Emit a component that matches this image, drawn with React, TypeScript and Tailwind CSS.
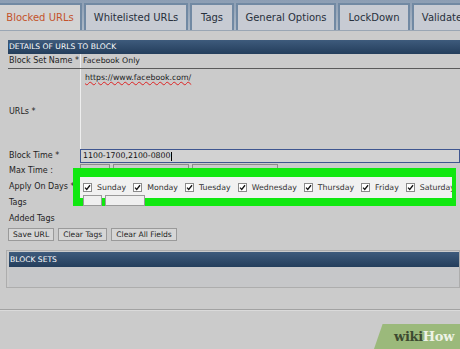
import React from 'react';

const tabs = [
  { label: 'Blocked URLs', w: 'w-[82px]', active: true },
  { label: 'Whitelisted URLs', w: 'w-[104px]' },
  { label: 'Tags', w: 'w-[44px]' },
  { label: 'General Options', w: 'w-[100px]' },
  { label: 'LockDown', w: 'w-[72px]' },
  { label: 'Validate', w: 'w-[60px]' },
];

const days = ['Sunday', 'Monday', 'Tuesday', 'Wednesday', 'Thursday', 'Friday', 'Saturday'];

function Check() {
  return (
    <span className="grid size-[9px] shrink-0 place-items-center border border-[#8a8a8a] bg-white">
      <svg width="7" height="7" viewBox="0 0 10 10" aria-hidden="true">
        <path d="M1.5 5.2l2.4 2.6L8.6 1.8" stroke="#111" strokeWidth="1.8" fill="none" />
      </svg>
    </span>
  );
}

function Label({ children, className = '' }: { children: React.ReactNode; className?: string }) {
  return <div className={`w-[72px] shrink-0 whitespace-nowrap pl-[1px] text-[8px] text-[#1e1e1e] ${className}`}>{children}</div>;
}

export default function App() {
  return (
    <div className="relative h-[349px] w-[460px] overflow-hidden bg-[#cbcbcb] font-['DejaVu_Sans',sans-serif]">
      {/* tab strip */}
      <div className="flex h-[31px] items-end gap-[2px] border-b border-[#9aa6b4] bg-gradient-to-b from-[#8b9db3] to-[#aeb9c6] pt-[4px]">
        {tabs.map((t) => (
          <div
            key={t.label}
            className={`flex h-[27px] shrink-0 items-center justify-center whitespace-nowrap border-x-2 border-t-2 border-[#7189a3] text-[10px] ${t.w} ${
              t.active ? 'border-l-0 bg-[#d3d3d3] text-[#c4532c]' : 'bg-[#c7cbd3] text-[#27303c]'
            }`}
          >
            {t.label}
          </div>
        ))}
      </div>

      {/* details panel */}
      <div className="ml-[8px] mt-[9px]">
        <div className="flex h-[14px] items-center bg-gradient-to-b from-[#3e5b7c] to-[#243e5c] pl-[1px] text-[7.6px] text-white">
          DETAILS OF URLS TO BLOCK
        </div>

        <div className="flex h-[15px] items-center border-b border-[#5a5a5a]">
          <Label>Block Set Name *</Label>
          <div className="flex h-full flex-1 items-center border-l border-[#eeeeee] pl-[2px] text-[7.8px] text-[#222]">
            Facebook Only
          </div>
        </div>

        <div className="flex h-[80px]">
          <Label className="self-center pt-[6px]">URLs *</Label>
          <div className="flex-1 border-l border-[#eeeeee] pl-[4px] pt-[3px] text-[7.8px] text-[#222]">
            <span className="underline decoration-[#d22] decoration-wavy decoration-[0.6px] underline-offset-[1px]">
              https://www.facebook.com/
            </span>
          </div>
        </div>

        <div className="flex h-[14px] items-center">
          <Label>Block Time *</Label>
          <div className="flex h-full flex-1 items-center border border-[#3f5690] bg-[#d2d2d2] pl-[2px] text-[7.8px] text-[#111]">
            1100-1700,2100-0800<span className="ml-[1px] h-[9px] w-px bg-black" />
          </div>
        </div>

        <div className="flex h-[15px] items-center">
          <Label>Max Time :</Label>
          <div className="flex h-full flex-1 items-start gap-[3px] pt-[1px]">
            <span className="h-[8px] w-[30px] border border-[#8c8c8c]" />
            <span className="h-[8px] w-[76px] border border-[#8c8c8c]" />
            <span className="h-[8px] w-[86px] border border-[#8c8c8c]" />
          </div>
        </div>

        <div className="flex h-[17px] items-center">
          <Label>Apply On Days *</Label>
        </div>
        <div className="flex h-[16px] items-center">
          <Label>Tags</Label>
        </div>
        <div className="flex h-[15px] items-center">
          <Label>Added Tags</Label>
        </div>

        <div className="flex gap-[4px] pt-[2px]">
          {['Save URL', 'Clear Tags', 'Clear All Fields'].map((b) => (
            <button
              key={b}
              type="button"
              className="h-[13px] border border-[#9a9a9a] bg-[#d6d6d6] px-[4px] text-[7.6px] leading-none text-[#222]"
            >
              {b}
            </button>
          ))}
        </div>
      </div>

      {/* block sets panel */}
      <div className="ml-[6px] mt-[9px] border border-[#adadad] pl-[2px] pt-[1px]">
        <div className="flex h-[15px] items-center bg-gradient-to-b from-[#3e5b7c] to-[#243e5c] pl-[1px] text-[7.6px] text-white">
          BLOCK SETS
        </div>
        <div className="h-[20px] bg-[#c6c7c9]" />
      </div>

      <div className="mt-[21px] h-[2px] border-t border-[#a2a2a2] bg-[#dadada]" />

      {/* green highlight over the days row */}
      <div className="absolute left-[73px] top-[168px] h-[38px] w-[383px] bg-[#10e810] pl-[7px] pt-[9px]">
        <div className="flex h-[21px] w-[372px] items-center gap-[7px] overflow-hidden bg-[#f1f1f1] pl-[3px] text-[7.8px] text-[#333]">
          {days.map((d) => (
            <div key={d} className="flex shrink-0 items-center gap-[5px]">
              <Check />
              <span>{d}</span>
            </div>
          ))}
        </div>
        <div className="flex gap-[3px] pl-[3px]">
          <span className="-mt-[3px] h-[11px] w-[19px] border border-[#9a9a9a] bg-[#efefef]" />
          <span className="-mt-[3px] h-[11px] w-[40px] border border-[#9a9a9a] bg-[#efefef]" />
        </div>
      </div>

      {/* watermark */}
      <div className="absolute bottom-0 right-0 flex h-[25px] w-[86px] items-center justify-end bg-[#9bb97b] pr-[6px] [clip-path:polygon(10%_0,100%_0,100%_100%,0_100%)]">
        <span className="font-['DejaVu_Serif',serif] text-[13px] font-bold tracking-tight">
          <span className="text-[#3d4a30]">wiki</span>
          <span className="text-[#eef3e6]">How</span>
        </span>
      </div>
    </div>
  );
}
